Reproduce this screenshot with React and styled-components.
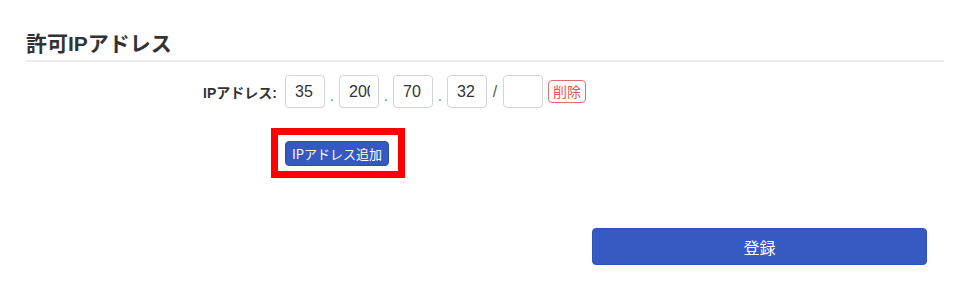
import React from 'react';
import styled, { createGlobalStyle } from 'styled-components';

const GlobalStyle = createGlobalStyle`
  body {
    margin: 0;
    background: #fff;
    font-family: "Liberation Sans", "Noto Sans CJK JP", sans-serif;
    color: #333;
  }
`;

const octets = ['35', '200', '70', '32'];

const App = () => (
  <Page>
    <GlobalStyle />
    <Heading>許可IPアドレス</Heading>
    <FormRow>
      <Label>IPアドレス:</Label>
      <Fields>
        {octets.map((v, i) => (
          <React.Fragment key={i}>
            {i > 0 && <Sep>.</Sep>}
            <Octet defaultValue={v} readOnly />
          </React.Fragment>
        ))}
        <Slash>/</Slash>
        <Octet defaultValue="" readOnly />
        <DeleteButton type="button">削除</DeleteButton>
      </Fields>
    </FormRow>
    <AddRow>
      <Highlight>
        <AddButton type="button">IPアドレス追加</AddButton>
      </Highlight>
    </AddRow>
    <Footer>
      <SubmitButton type="button">登録</SubmitButton>
    </Footer>
  </Page>
);

export default App;

const Page = styled.div`
  width: 960px;
  height: 286px;
  box-sizing: border-box;
  padding: 29px 16px 0 26px;
`;

const Heading = styled.h2`
  margin: 0;
  font-size: 21px;
  font-weight: bold;
  line-height: 30px;
  padding-bottom: 1px;
  border-bottom: 2px solid #ececec;
  color: #333;
`;

const FormRow = styled.div`
  display: flex;
  align-items: center;
  margin-top: 13px;
  height: 33px;
`;

const Label = styled.label`
  width: 251px;
  text-align: right;
  font-size: 14px;
  font-weight: bold;
  margin-right: 8px;
  color: #333;
`;

const Fields = styled.div`
  display: flex;
  align-items: center;
`;

const Octet = styled.input`
  width: 40px;
  height: 33px;
  box-sizing: border-box;
  border: 1px solid #d4d4d4;
  border-radius: 4px;
  padding: 0 8px 0 9px;
  font-family: "Liberation Sans", sans-serif;
  font-size: 16px;
  color: #333;
  background: #fff;
  outline: none;
`;

const Sep = styled.span`
  width: 14px;
  text-align: center;
  font-size: 14px;
  color: #666;
  padding-top: 8px;
`;

const Slash = styled.span`
  width: 16px;
  text-align: center;
  font-size: 16px;
  color: #555;
`;

const DeleteButton = styled.button`
  margin-left: 5px;
  width: 38px;
  height: 23px;
  padding: 0;
  border: 1px solid #e07070;
  border-radius: 4px;
  background: #fff;
  color: #e05a5a;
  font-family: "Noto Sans CJK JP", sans-serif;
  font-size: 14px;
  line-height: 21px;
`;

const AddRow = styled.div`
  display: flex;
  margin-top: 20px;
  padding-left: 245px;
`;

const Highlight = styled.div`
  border: 7px solid #ff0000;
  padding: 6px 9px 5px 7px;
  display: flex;
`;

const AddButton = styled.button`
  height: 25px;
  padding: 0 6px;
  border: 1px solid #2f4fb0;
  border-radius: 4px;
  background: #3658c2;
  color: #fff;
  font-family: "Noto Sans CJK JP", sans-serif;
  font-size: 13px;
  line-height: 23px;
`;

const Footer = styled.div`
  display: flex;
  justify-content: flex-end;
  margin-top: 50px;
  padding-right: 17px;
`;

const SubmitButton = styled.button`
  width: 335px;
  height: 37px;
  border: 1px solid #2f52b8;
  border-radius: 4px;
  background: #3659c2;
  color: #fff;
  font-family: "Noto Sans CJK JP", sans-serif;
  font-size: 16px;
`;
